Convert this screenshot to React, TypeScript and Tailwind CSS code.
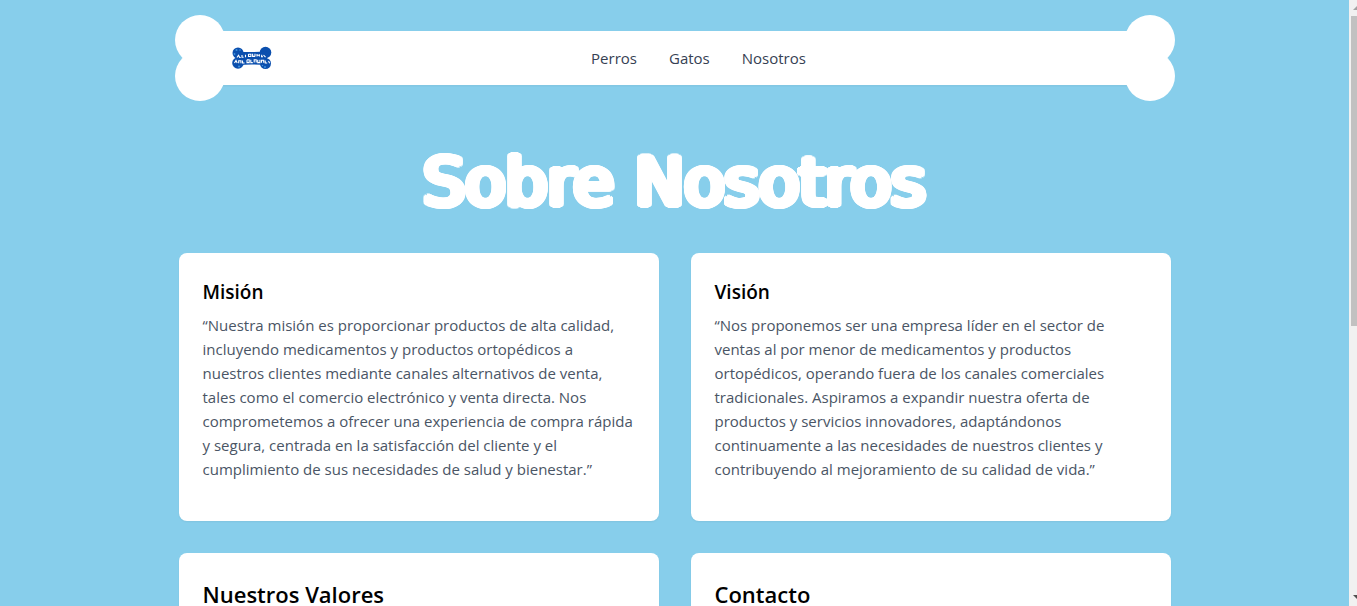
import React from "react";

const mission = [
  "“Nuestra misión es proporcionar productos de alta calidad,",
  "incluyendo medicamentos y productos ortopédicos a",
  "nuestros clientes mediante canales alternativos de venta,",
  "tales como el comercio electrónico y venta directa. Nos",
  "comprometemos a ofrecer una experiencia de compra rápida",
  "y segura, centrada en la satisfacción del cliente y el",
  "cumplimiento de sus necesidades de salud y bienestar.”",
];

const vision = [
  "“Nos proponemos ser una empresa líder en el sector de",
  "ventas al por menor de medicamentos y productos",
  "ortopédicos, operando fuera de los canales comerciales",
  "tradicionales. Aspiramos a expandir nuestra oferta de",
  "productos y servicios innovadores, adaptándonos",
  "continuamente a las necesidades de nuestros clientes y",
  "contribuyendo al mejoramiento de su calidad de vida.”",
];

function BoneLogo() {
  return (
    <svg viewBox="0 0 40 24" className="h-6 w-10" role="img" aria-label="Logo">
      <g fill="#0b4fae">
        <circle cx="6" cy="7" r="5.5" />
        <circle cx="6" cy="17" r="5.8" />
        <circle cx="33.500" cy="6.500" r="5.8" />
        <circle cx="33.500" cy="17.500" r="5.5" />
        <path d="M5 5.500 Q20 6.500 35 5.500 V19 Q20 18 5 19Z" />
      </g>
      <g fill="#3f93de">
        <circle cx="4.500" cy="4" r="1" />
        <circle cx="8" cy="4" r=".8" />
        <circle cx="2.500" cy="8" r=".9" />
        <circle cx="7" cy="20.500" r="1" />
        <circle cx="33" cy="21" r="1" />
        <circle cx="30.500" cy="19.500" r=".7" />
      </g>
      <g fill="none" stroke="#fff" strokeWidth="1.1">
        <path d="M5 11.500l1.500-2.200 1.200 2.200h1M10 9v2.200h1.600M13.500 11.200V8.800M16.500 8v2.500h2.400V8.200h-2.400M20.600 7.800v2.600h2.400M23 7.800v2.600M25 8v2.600M25 9.300h2.400M27.400 8.200v2.400M29 10.800h2M29.700 8.800v2M31.500 9l2 2.200" />
        <path d="M2.500 17l1.500-2.500 1.200 2.500M6.700 17.200v-2.500h2.200v2.500M10.500 14.500V17h2M15 13.800v2.800h2.200v-2.800H15M18.800 13.800v2.800h2M22.200 16.600v-2.800h2v2.800M25.700 13.800v2.800h2.200v-2.800M29.500 16.800v-2.600h2.200v2.600M33.200 14.500v2.500h2M36.500 15l1.200 2.200" />
      </g>
    </svg>
  );
}

function BoneEnd({ side }: { side: "left" | "right" }) {
  return (
    <span
      aria-hidden="true"
      className={`absolute -top-4 ${side === "left" ? "-left-[25px]" : "-right-[25px]"}`}
    >
      <span className="block size-[50px] rounded-full bg-white" />
      <span className="-mt-3.5 block size-[50px] rounded-full bg-white" />
    </span>
  );
}

function TextCard({ title, lines }: { title: string; lines: string[] }) {
  return (
    <section className="rounded-lg bg-white px-6 pt-6 pb-10 shadow-xs">
      <h2 className="mb-1.5 text-[19px] leading-[30px] font-semibold text-black">{title}</h2>
      <p className="text-[15px] leading-6 whitespace-nowrap text-gray-600">
        {lines.map((line) => (
          <React.Fragment key={line}>
            {line}
            <br />
          </React.Fragment>
        ))}
      </p>
    </section>
  );
}

function HeadingCard({ title }: { title: string }) {
  return (
    <section className="rounded-lg bg-white p-6 shadow-xs">
      <h2 className="text-[22px] leading-[34px] font-semibold text-black">{title}</h2>
    </section>
  );
}

export default function App() {
  return (
    <div className="flex h-screen overflow-hidden bg-[#87ceeb] font-['Open_Sans','Noto_Sans',sans-serif]">
      <div className="min-w-0 flex-1">
        <header className="mx-auto mt-[31px] w-full max-w-[950px]">
          <div className="relative flex h-[54px] items-center gap-2 bg-white px-8 shadow-xs">
            <BoneEnd side="left" />
            <BoneEnd side="right" />
            <a href="#inicio" className="relative">
              <BoneLogo />
            </a>
            <nav className="flex flex-1 justify-center gap-8 text-[15px] leading-6 text-gray-700">
              <a href="#perros">Perros</a>
              <a href="#gatos">Gatos</a>
              <a href="#nosotros">Nosotros</a>
            </nav>
          </div>
        </header>
        <main className="mx-auto w-full max-w-5xl px-4 pt-[62px]">
          <h1 className="text-center font-['DejaVu_Sans',sans-serif] text-[66px] leading-[72px] font-normal text-white [text-shadow:4px_0_#fff,-4px_0_#fff,0_3px_#fff,0_-3px_#fff,4px_1px_#fff,-4px_1px_#fff,4px_-1px_#fff,-4px_-1px_#fff,3px_2px_#fff,-3px_2px_#fff,3px_-2px_#fff,-3px_-2px_#fff,1px_3px_#fff,-1px_3px_#fff,1px_-3px_#fff,-1px_-3px_#fff]">
            Sobre Nosotros
          </h1>
          <div className="mt-[34px] grid grid-cols-2 gap-8">
            <TextCard title="Misión" lines={mission} />
            <TextCard title="Visión" lines={vision} />
            <HeadingCard title="Nuestros Valores" />
            <HeadingCard title="Contacto" />
          </div>
        </main>
      </div>
      <div aria-hidden="true" className="flex w-2 flex-col bg-[#f1f1f1] pl-0.5">
        <svg viewBox="0 0 6 16" className="h-4 w-1.5">
          <path d="M2 10l4-4v4z" fill="#a3a3a3" />
        </svg>
        <div className="h-[310px] bg-[#c1c1c1]" />
        <svg viewBox="0 0 6 16" className="mt-auto h-4 w-1.5">
          <path d="M2 5h4v4z" fill="#505050" />
        </svg>
      </div>
    </div>
  );
}
